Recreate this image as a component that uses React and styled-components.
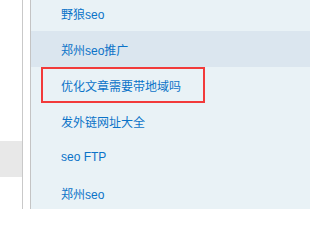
import React from "react";
import styled, { createGlobalStyle } from "styled-components";

const GlobalStyle = createGlobalStyle`
  html, body {
    margin: 0;
    padding: 0;
    background: #fff;
  }
  body {
    font-family: "Liberation Sans", "Noto Sans CJK SC", sans-serif;
  }
`;

const Page = styled.div`
  display: flex;
  width: 310px;
  height: 209px;
  overflow: hidden;
`;

const SideRail = styled.div`
  width: 22px;
  border-right: 1px solid #c9c9c9;
  flex-shrink: 0;
`;

const RailBlock = styled.div`
  margin-top: 141px;
  height: 36px;
  background: #e8e8e8;
`;

const Gutter = styled.div`
  width: 7px;
  border-right: 1px solid #c4c4c4;
  flex-shrink: 0;
`;

const List = styled.ul`
  flex: 1;
  margin: 0;
  padding: 0;
  list-style: none;
  background: #e9f2f6;
`;

const Inner = styled.div`
  margin-top: -5px;
`;

const Item = styled.li`
  height: 36px;
  display: flex;
  align-items: center;
  background: ${(p) => (p.$active ? "#dbe6ef" : "transparent")};
`;

const ItemLink = styled.a`
  display: flex;
  align-items: center;
  box-sizing: border-box;
  height: 36px;
  font-size: 12px;
  color: #0b73c8;
  text-decoration: none;
  padding-left: 30px;
`;

const MarkedLink = styled(ItemLink)`
  margin-left: 10px;
  width: 164px;
  padding-left: 18px;
  border: 2px solid #f23a3a;
`;

const items = [
  { text: "野狼seo" },
  { text: "郑州seo推广", active: true },
  { text: "优化文章需要带地域吗", marked: true },
  { text: "发外链网址大全" },
  { text: "seo FTP" },
  { text: "郑州seo" },
];

export default function App() {
  return (
    <Page>
      <GlobalStyle />
      <SideRail>
        <RailBlock />
      </SideRail>
      <Gutter />
      <List>
        <Inner>
          {items.map((item) => (
            <Item key={item.text} $active={item.active}>
              {item.marked ? (
                <MarkedLink href="#">{item.text}</MarkedLink>
              ) : (
                <ItemLink href="#">{item.text}</ItemLink>
              )}
            </Item>
          ))}
        </Inner>
      </List>
    </Page>
  );
}
